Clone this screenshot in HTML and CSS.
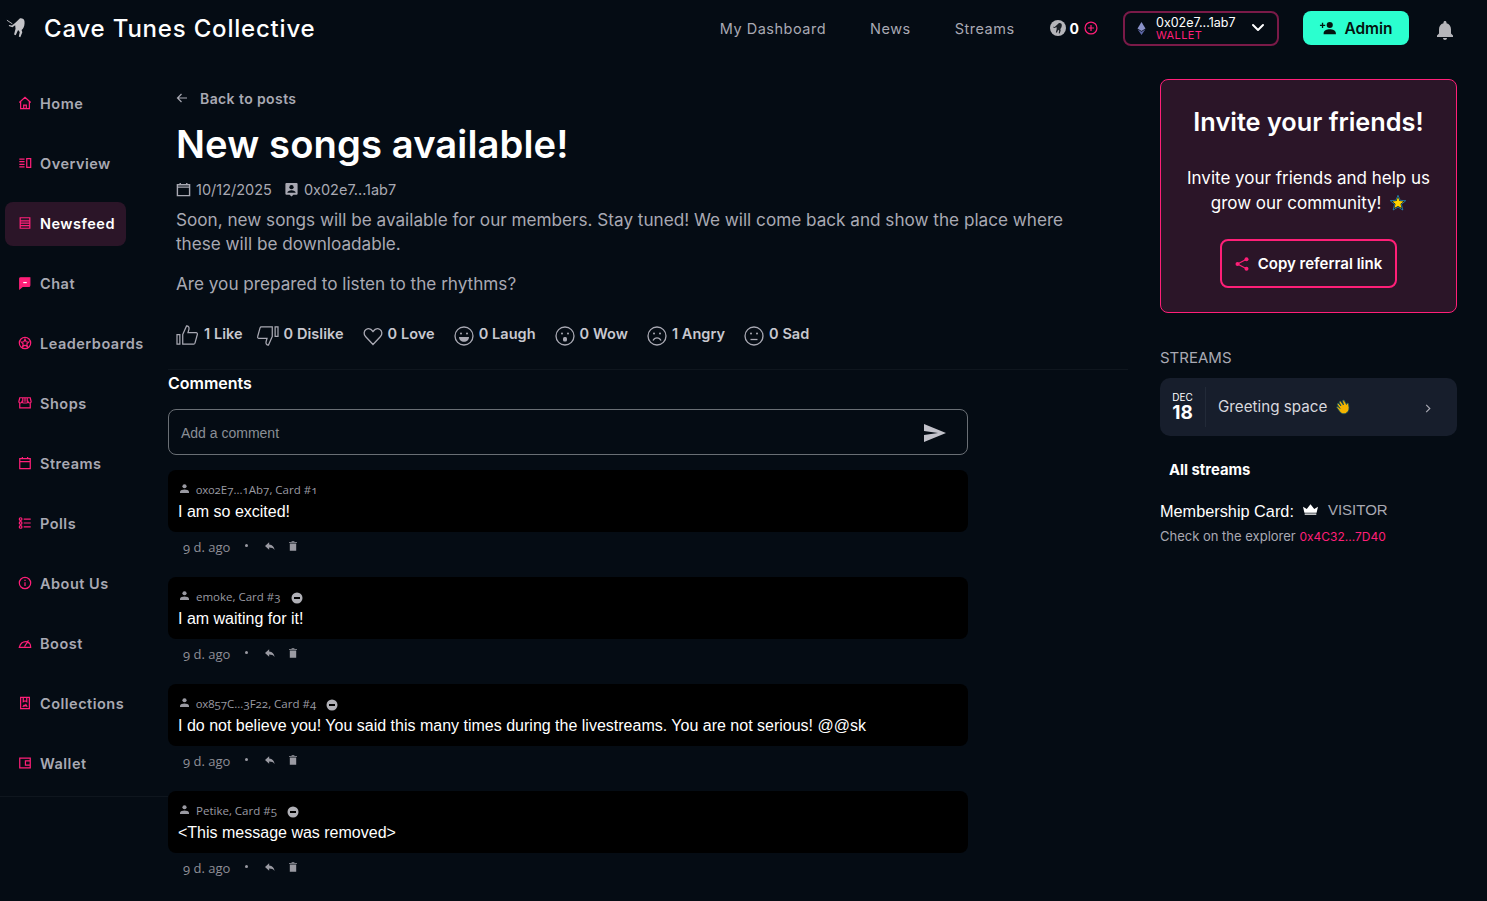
FILE: index.html
```html
<!DOCTYPE html>
<html>
<head>
<meta charset="utf-8">
<title>Cave Tunes Collective</title>
<link rel="stylesheet" href="styles.css">
</head>
<body>

<header class="topBar">
	<div class="brand">
		<svg class="brandLogo" viewBox="0 0 24 24"><path fill="#c4c4c8" d="M15 1.500c2.500-.6 5 .8 5.200 3.300.3 3-.4 6.200-2 8.400l-1.200 1 .8 2.300-2.200 5.500-1.600-.6 1-5-1.800-2.200-2.600 5.600-1.800-.7 1.600-6.400-.4-3.600-3 2.200-4-1.400.4-1.100 3.200.6 4.200-3.600z"/><path stroke="#c4c4c8" stroke-width="1" d="M1 3.500l6 4"/></svg>
		<span class="brandName">Cave Tunes Collective</span>
	</div>
	<nav class="topNav">
		<a>My Dashboard</a>
		<a>News</a>
		<a>Streams</a>
	</nav>
	<div class="tokens">
		<svg class="tokenCoin" viewBox="0 0 16 16"><circle cx="8" cy="8" r="8" fill="#b5b5ba"/><path fill="#1a1f26" d="M9 3c1.500-.4 2.800.5 2.800 2 0 1.600-.5 3-1.500 4l.4 1.500-1 3-1-.3.500-2.500-1-1-1.300 3-1-.4.800-3.300-.2-2-1.800 1-1.700-.7.200-.6 1.500.3z"/></svg>
		<b>0</b>
		<svg class="tokenPlus" viewBox="0 0 16 16" fill="none" stroke="#ff1f78" stroke-width="1.400"><circle cx="8" cy="8" r="6.800"/><path d="M8 4.500v7M4.500 8h7"/></svg>
	</div>
	<div class="walletBtn">
		<svg class="walletEth" viewBox="0 0 12 18"><path fill="#8a92c9" d="M6 0l5.500 9L6 12.300.5 9z"/><path fill="#5d66a5" d="M6 13.500L11.500 10 6 18 .5 10z"/></svg>
		<div class="walletText">
			<span class="walletAddr">0x02e7...1ab7</span>
			<span class="walletLabel">WALLET</span>
		</div>
		<svg class="walletArrow" viewBox="0 0 14 10" fill="none" stroke="#fff" stroke-width="2" stroke-linecap="round" stroke-linejoin="round"><path d="M2 2l5 5 5-5"/></svg>
	</div>
	<div class="adminBtn">
		<svg viewBox="0 0 20 16" fill="#04140f"><circle cx="12" cy="4.500" r="3.500"/><path d="M5 14c0-3 3.500-4.500 7-4.500s7 1.500 7 4.500v1H5zM3 2h1.500v2.300h2.300v1.500H4.500V8H3V5.800H.8V4.300H3z"/></svg>
		Admin
	</div>
	<svg class="bell" viewBox="0 0 18 20" fill="#b5b5ba"><path d="M9 0c.9 0 1.500.6 1.500 1.500v.7c2.900.7 4.500 3.200 4.500 6v4.300l2 2V16H1v-1.500l2-2V8.200c0-2.800 1.600-5.300 4.500-6v-.7C7.500.6 8.100 0 9 0zM7 17h4c0 1.200-.9 2-2 2s-2-.8-2-2z"/></svg>
</header>

<div class="pageGrid">

	<aside class="sideNav">
		<a class="navItem"><svg viewBox="0 0 16 16"><path d="M1.500 7.500L8 1.500l6.500 6M3 6.500v8h10v-8M6.500 14.500v-4h3v4"/></svg>Home</a>
		<a class="navItem"><svg viewBox="0 0 16 16"><path d="M1.500 3.500h6M1.500 6.500h6M1.500 9.500h6M1.500 12.500h6M10 3h4.500v10H10z"/></svg>Overview</a>
		<a class="navItem active"><svg viewBox="0 0 16 16"><path d="M2.500 2h11v12h-11zM2.500 5.500h11M2.500 8.200h11M2.500 11h11"/></svg>Newsfeed</a>
		<a class="navItem"><svg viewBox="0 0 16 16"><path class="solid" d="M3 2h10.500v8.500c0 1-.5 1.500-1.500 1.500H5l-3 2.500V3c0-.6.400-1 1-1z"/><path class="cut" d="M6 7.500h4"/></svg>Chat</a>
		<a class="navItem"><svg viewBox="0 0 16 16"><circle cx="8" cy="8" r="6.500"/><path d="M8 3.800l1.300 2.800 3 .3-2.200 2.100.6 3L8 10.500 5.300 12l.6-3-2.200-2.100 3-.3z"/></svg>Leaderboards</a>
		<a class="navItem"><svg viewBox="0 0 16 16"><path d="M2 2h12l1 4.500c0 1-1 1.500-1.700 1.500S12 7.500 11.500 6.500C11 7.500 10 8 9.700 8H6.300C6 8 5 7.500 4.500 6.500 4 7.500 3.500 8 2.700 8S1 7.500 1 6.500zM2 8v5.500h12V8M5.500 2v4.500M8 2v4.500M10.500 2v4.500"/></svg>Shops</a>
		<a class="navItem"><svg viewBox="0 0 16 16"><path d="M2 3h12v11.500H2zM2 6.500h12M5 1v2M11 1v2"/></svg>Streams</a>
		<a class="navItem"><svg viewBox="0 0 16 16"><circle cx="3" cy="3.500" r="1.500"/><circle cx="3" cy="8" r="1.500"/><circle cx="3" cy="12.500" r="1.500"/><path d="M6.500 3.500h8M6.500 8h8M6.500 12.500h8"/></svg>Polls</a>
		<a class="navItem"><svg viewBox="0 0 16 16"><circle cx="8" cy="8" r="6.500"/><path d="M8 7v4.500M8 4.300v1.400"/></svg>About Us</a>
		<a class="navItem"><svg viewBox="0 0 16 16"><path d="M1.500 13h13c0-4-2-6.500-5.500-6.500-3.500 0-6.500 2.500-7.500 6.500zM7.500 12l4.500-7M11 8l2-.5"/></svg>Boost</a>
		<a class="navItem"><svg viewBox="0 0 16 16"><path d="M3 1.500h10v13H3zM6 1.500v5l2-1 2 1v-5M5.500 12.500l1.500-2 1 1 1-1.500 1.500 2.500"/></svg>Collections</a>
		<a class="navItem"><svg viewBox="0 0 16 16"><path d="M2 2.500h12v11H2zM14 5.500H8.500v5H14"/></svg>Wallet</a>
	</aside>

	<main class="mainCol">
		<div class="post">
			<a class="backLink">
				<svg viewBox="0 0 12 12" fill="none" stroke="#a9a9b3" stroke-width="1.200"><path d="M11 6H1.500M5.500 2L1.500 6l4 4"/></svg>
				Back to posts
			</a>
			<h1 class="postTitle">New songs available!</h1>
			<div class="postMeta">
				<svg viewBox="0 0 16 16" fill="none" stroke="#a9a9b3" stroke-width="1.500"><path d="M1.500 3h13v11.500h-13zM1.500 5.500h13M4.500 1v2M11.500 1v2"/></svg>
				<span>10/12/2025</span>
				<svg class="metaUser" viewBox="0 0 16 16" fill="#a9a9b3"><path d="M2.500 1h11c.6 0 1 .4 1 1v10.500c0 .6-.4 1-1 1H10L8 15.500 6 13.500H2.500c-.6 0-1-.4-1-1V2c0-.6.400-1 1-1z"/><circle cx="8" cy="5.500" r="2.300" fill="#050c14"/><path fill="#050c14" d="M3.500 11.500c0-1.800 2.500-2.800 4.500-2.800s4.500 1 4.500 2.800z"/></svg>
				<span>0x02e7...1ab7</span>
			</div>
			<p class="postText">Soon, new songs will be available for our members. Stay tuned! We will come back and show the place where these will be downloadable.</p>
			<p class="postText second">Are you prepared to listen to the rhythms?</p>
			<div class="reactions">
				<span class="reaction"><svg class="thumb" viewBox="0 0 24 22"><path d="M1 10v10h3V10zM7 10l4-9c2 0 3 1.500 2.500 3.500L12.500 8H21c1 0 1.700 1 1.300 2l-2.500 9c-.2.600-.7 1-1.300 1H7z"/></svg><b>1 Like</b></span>
				<span class="reaction"><svg class="thumbDown" viewBox="0 0 24 22"><path d="M23 12V2h-3v10zM17 12l-4 9c-2 0-3-1.500-2.500-3.500l1-3.500H3c-1 0-1.700-1-1.300-2l2.500-9C4.400 2.400 4.900 2 5.500 2H17z"/></svg><b>0 Dislike</b></span>
				<span class="reaction"><svg viewBox="0 0 20 20"><path d="M10 18.500L2.500 10.500C.5 8.300.8 5 3 3.500c2.200-1.400 5-.8 7 2 2-2.800 4.800-3.400 7-2 2.200 1.500 2.500 4.800.5 7z"/></svg><b>0 Love</b></span>
				<span class="reaction"><svg viewBox="0 0 20 20"><circle cx="10" cy="10" r="9"/><circle class="dot" cx="7" cy="7.500" r="1"/><circle class="dot" cx="13" cy="7.500" r="1"/><path class="dot" d="M5 11h10c0 3-2.200 4.800-5 4.800S5 14 5 11z"/></svg><b>0 Laugh</b></span>
				<span class="reaction"><svg viewBox="0 0 20 20"><circle cx="10" cy="10" r="9"/><circle class="dot" cx="7" cy="7.500" r="1"/><circle class="dot" cx="13" cy="7.500" r="1"/><rect class="dot" x="8" y="11" width="4" height="4.500" rx="1.500"/></svg><b>0 Wow</b></span>
				<span class="reaction"><svg viewBox="0 0 20 20"><circle cx="10" cy="10" r="9"/><circle class="dot" cx="7" cy="7.500" r="1"/><circle class="dot" cx="13" cy="7.500" r="1"/><path d="M6 14.500c1-2 2.500-2.700 4-2.700s3 .7 4 2.700"/></svg><b>1 Angry</b></span>
				<span class="reaction"><svg viewBox="0 0 20 20"><circle cx="10" cy="10" r="9"/><circle class="dot" cx="7" cy="7.500" r="1"/><circle class="dot" cx="13" cy="7.500" r="1"/><path d="M6.500 13.500h7"/></svg><b>0 Sad</b></span>
			</div>
		</div>

		<section class="comments">
			<h2 class="commentsTitle">Comments</h2>
			<div class="commentInput">
				<span>Add a comment</span>
				<svg viewBox="0 0 22 18" fill="#c2c2ca"><path d="M0 0l22 9L0 18v-7l14-2L0 7z"/></svg>
			</div>

			<article class="comment">
				<div class="commentBox">
					<div class="commentAuthor"><svg class="personIcon" viewBox="0 0 10 10"><circle cx="5" cy="2.500" r="2.300"/><path d="M0 10V8.500C0 6.800 3 6 5 6s5 .8 5 2.500V10z"/></svg>0x02E7...1Ab7, Card #1</div>
					<div class="commentText">I am so excited!</div>
				</div>
				<div class="commentFoot"><span>9 d. ago</span><i class="footDot"></i><svg class="footIcon" viewBox="0 0 12 10"><path d="M5 0L0 4.500 5 9V6.200c3 0 5 .8 6.500 3C11 5.500 9 3 5 2.700z"/></svg><svg class="footIcon trash" viewBox="0 0 10 12"><path d="M1 3h8v9H1zM0 1h3l.5-1h3l.5 1h3v1H0z"/></svg></div>
			</article>

			<article class="comment">
				<div class="commentBox">
					<div class="commentAuthor"><svg class="personIcon" viewBox="0 0 10 10"><circle cx="5" cy="2.500" r="2.300"/><path d="M0 10V8.500C0 6.800 3 6 5 6s5 .8 5 2.500V10z"/></svg>emoke, Card #3<svg class="minusIcon" viewBox="0 0 12 12"><circle cx="6" cy="6" r="5.500"/><path class="bar" d="M3 5h6v2H3z"/></svg></div>
					<div class="commentText">I am waiting for it!</div>
				</div>
				<div class="commentFoot"><span>9 d. ago</span><i class="footDot"></i><svg class="footIcon" viewBox="0 0 12 10"><path d="M5 0L0 4.500 5 9V6.200c3 0 5 .8 6.500 3C11 5.500 9 3 5 2.700z"/></svg><svg class="footIcon trash" viewBox="0 0 10 12"><path d="M1 3h8v9H1zM0 1h3l.5-1h3l.5 1h3v1H0z"/></svg></div>
			</article>

			<article class="comment">
				<div class="commentBox">
					<div class="commentAuthor"><svg class="personIcon" viewBox="0 0 10 10"><circle cx="5" cy="2.500" r="2.300"/><path d="M0 10V8.500C0 6.800 3 6 5 6s5 .8 5 2.500V10z"/></svg>0x857C...3F22, Card #4<svg class="minusIcon" viewBox="0 0 12 12"><circle cx="6" cy="6" r="5.500"/><path class="bar" d="M3 5h6v2H3z"/></svg></div>
					<div class="commentText">I do not believe you! You said this many times during the livestreams. You are not serious! @@sk</div>
				</div>
				<div class="commentFoot"><span>9 d. ago</span><i class="footDot"></i><svg class="footIcon" viewBox="0 0 12 10"><path d="M5 0L0 4.500 5 9V6.200c3 0 5 .8 6.500 3C11 5.500 9 3 5 2.700z"/></svg><svg class="footIcon trash" viewBox="0 0 10 12"><path d="M1 3h8v9H1zM0 1h3l.5-1h3l.5 1h3v1H0z"/></svg></div>
			</article>

			<article class="comment">
				<div class="commentBox">
					<div class="commentAuthor"><svg class="personIcon" viewBox="0 0 10 10"><circle cx="5" cy="2.500" r="2.300"/><path d="M0 10V8.500C0 6.800 3 6 5 6s5 .8 5 2.500V10z"/></svg>Petike, Card #5<svg class="minusIcon" viewBox="0 0 12 12"><circle cx="6" cy="6" r="5.500"/><path class="bar" d="M3 5h6v2H3z"/></svg></div>
					<div class="commentText">&lt;This message was removed&gt;</div>
				</div>
				<div class="commentFoot"><span>9 d. ago</span><i class="footDot"></i><svg class="footIcon" viewBox="0 0 12 10"><path d="M5 0L0 4.500 5 9V6.200c3 0 5 .8 6.500 3C11 5.500 9 3 5 2.700z"/></svg><svg class="footIcon trash" viewBox="0 0 10 12"><path d="M1 3h8v9H1zM0 1h3l.5-1h3l.5 1h3v1H0z"/></svg></div>
			</article>
		</section>
	</main>

	<aside class="rightCol">
		<div class="inviteCard">
			<h3 class="inviteTitle">Invite your friends!</h3>
			<p class="inviteText">Invite your friends and help us grow our community! <svg class="starIcon" viewBox="0 0 16 16"><path fill="#0b0b0b" stroke="#2a9fd0" stroke-width=".7" d="M8 .3l2.100 5 5.600.4-4.300 3.600 1.400 5.700L8 12l-4.800 3 1.400-5.700L.3 5.700l5.600-.4z"/><path fill="#ffd400" d="M8 2.300l1.500 3.800 4.100.3-3.100 2.600 1 4.100L8 10.900l-3.500 2.200 1-4.100-3.100-2.600 4.100-.3z"/></svg></p>
			<div class="referralBtn">
				<svg viewBox="0 0 14 14"><circle fill="#ff1f78" cx="11.500" cy="2.300" r="2"/><circle fill="#ff1f78" cx="2.500" cy="7" r="2"/><circle fill="#ff1f78" cx="11.500" cy="11.700" r="2"/><path fill="none" stroke="#ff1f78" stroke-width="1.200" d="M11.500 2.300L2.500 7l9 4.700"/></svg>
				Copy referral link
			</div>
		</div>

		<div class="streamsLabel">STREAMS</div>
		<div class="streamCard">
			<div class="streamDate"><span>DEC</span><b>18</b></div>
			<div class="streamName">Greeting space <svg class="clapIcon" viewBox="0 0 16 16"><path fill="#f4b400" stroke="#11505a" stroke-width=".8" d="M3 4l3 3-2-4 1.500-1 3 4-1-4.500L9 1l2.500 4.500.5-1.500 1.500.5.500 4c.3 2.500-1 5-3.500 6-2 .8-4 .2-5.500-1.500L1.500 8 3 7.500 5 9.500 2 5z"/></svg></div>
			<svg class="streamArrow" viewBox="0 0 6 10" fill="none" stroke="#a9a9b3" stroke-width="1.300"><path d="M1 1l4 4-4 4"/></svg>
		</div>
		<a class="allStreams">All streams</a>
		<div class="memberRow">
			<span>Membership Card:</span>
			<svg class="crown" viewBox="0 0 16 11" fill="#fff"><path d="M0 2.500l4 2.500L8 0l4 5 4-2.500L14.500 9h-13zM1.800 9.800h12.400V11H1.800z"/></svg>
			<span class="memberLevel">VISITOR</span>
		</div>
		<div class="explorerRow">Check on the explorer <span class="pink">0x4C32...7D40</span></div>
	</aside>

</div>

</body>
</html>
```

FILE: styles.css
```css
body{
	margin:0;
	height:901px;
	overflow:hidden;
	background:#050c14;
	color:#fff;
	font-family:"Inter","Noto Sans",sans-serif;
}
a{
	cursor:pointer;
}
svg{
	flex:none;
}

/* top bar */
.topBar{
	display:flex;
	align-items:center;
	height:56px;
	padding:0 33px 2px 6px;
}
.brand{
	display:flex;
	align-items:center;
	gap:16px;
	margin-right:auto;
}
.brandLogo{
	width:22px;
	height:22px;
}
.brandName{
	font-size:24px;
	font-weight:500;
	letter-spacing:.8px;
}
.topNav{
	display:flex;
	gap:44px;
	font-size:14.5px;
	letter-spacing:.5px;
	color:#a9a9b3;
	margin-right:35px;
}
.tokens{
	display:flex;
	align-items:center;
	gap:4px;
	font-size:14px;
	margin-right:25px;
}
.tokenCoin{
	width:16px;
	height:16px;
}
.tokenPlus{
	width:14px;
	height:14px;
	margin-left:1px;
}
.walletBtn{
	display:flex;
	align-items:center;
	box-sizing:border-box;
	width:156px;
	height:35px;
	padding:0 12px 0 12px;
	border:2px solid #7a1a48;
	border-radius:8px;
	margin-right:24px;
}
.walletEth{
	width:9px;
	height:13px;
	margin-right:10px;
}
.walletText{
	display:flex;
	flex-direction:column;
	flex:1;
	font-size:12.500px;
	line-height:13px;
}
.walletLabel{
	color:#ff1f78;
	font-size:11px;
	line-height:12px;
	letter-spacing:.4px;
}
.walletArrow{
	width:14px;
	height:10px;
}
.adminBtn{
	display:flex;
	align-items:center;
	justify-content:center;
	gap:7px;
	width:106px;
	height:34px;
	border-radius:8px;
	background:#2bffcf;
	color:#04140f;
	font-size:15.500px;
	font-weight:600;
	margin-right:27px;
}
.adminBtn svg{
	width:18px;
	height:14px;
}
.bell{
	width:18px;
	height:20px;
	margin-top:5px;
}

/* page columns */
.pageGrid{
	display:grid;
	grid-template-columns:168px 960px 329px;
	align-items:start;
}

/* left menu */
.sideNav{
	display:flex;
	flex-direction:column;
	padding:16px 0 2px;
	border-bottom:1px solid #0f161e;
}
.navItem{
	display:flex;
	align-items:center;
	gap:8px;
	height:44px;
	width:121px;
	box-sizing:border-box;
	margin:8px 0 8px 5px;
	padding:0 0 2px 13px;
	border-radius:8px;
	font-size:14.5px;
	font-weight:600;
	letter-spacing:.5px;
	color:#a9a9b3;
	white-space:nowrap;
}
.navItem.active{
	background:#2b1528;
	color:#fff;
}
.navItem svg{
	width:14px;
	height:14px;
	fill:none;
	stroke:#ff1f78;
	stroke-width:1.400;
}
.navItem svg .solid{
	fill:#ff1f78;
}
.navItem svg .cut{
	stroke:#fff;
}

/* post */
.mainCol{
	padding-top:28px;
	min-width:0;
}
.post{
	padding-left:8px;
}
.backLink{
	display:flex;
	align-items:center;
	gap:12px;
	height:24px;
	font-size:14px;
	font-weight:600;
	letter-spacing:.4px;
	color:#a9a9b3;
}
.backLink svg{
	width:12px;
	height:12px;
	margin-top:-1px;
}
.postTitle{
	margin:12px 0 0;
	font-size:38.200px;
	line-height:44px;
	font-weight:600;
	letter-spacing:.1px;
}
.postMeta{
	display:flex;
	align-items:center;
	gap:5px;
	height:24px;
	margin-top:11px;
	font-size:14.5px;
	color:#a9a9b3;
}
.postMeta svg{
	width:15px;
	height:15px;
}
.postMeta .metaUser{
	margin-left:7px;
}
.postText{
	margin:7px 0 0;
	font-size:17.150px;
	line-height:24px;
	color:#a9a9b3;
	width:900px;
}
.postText.second{
	margin-top:16px;
}
.reactions{
	display:flex;
	align-items:center;
	gap:19px;
	height:28px;
	margin-top:25px;
}
.reaction{
	display:flex;
	align-items:center;
	gap:5px;
	font-size:14.500px;
	color:#c8c8cf;
}
.reaction b{
	font-weight:600;
	margin-top:-3px;
	letter-spacing:.05px;
}
.reaction svg{
	width:20px;
	height:20px;
	fill:none;
	stroke:#a9a9b3;
	stroke-width:1.300;
	margin-top:1px;
}
.reaction svg.thumb,
.reaction svg.thumbDown{
	width:23px;
	height:21px;
}
.reaction svg.thumbDown{
	margin-left:-6px;
}

.reaction svg .dot{
	fill:#a9a9b3;
	stroke:none;
}

/* comments */
.comments{
	margin-top:20px;
	border-top:1px solid #0f161e;
}
.commentsTitle{
	margin:1px 0 0;
	font-size:16px;
	line-height:24px;
	font-weight:600;
}
.commentInput{
	display:flex;
	align-items:center;
	justify-content:space-between;
	box-sizing:border-box;
	width:800px;
	height:46px;
	margin-top:14px;
	padding:1px 21px 0 12px;
	border:1px solid #6a6f75;
	border-radius:8px;
	font-family:"Liberation Sans",sans-serif;
	font-size:14px;
	color:#8a8f96;
}
.commentInput svg{
	width:22px;
	height:18px;
}
.comment{
	width:800px;
	height:107px;
}
.comments .comment:first-of-type{
	margin-top:15px;
}
.commentBox{
	box-sizing:border-box;
	height:62px;
	padding:11px 10px 0;
	border-radius:8px;
	background:#000;
}
.commentAuthor{
	display:flex;
	align-items:center;
	height:17px;
	margin-bottom:2px;
	font-family:"Open Sans",sans-serif;
	font-variant-numeric:oldstyle-nums;
	font-size:11.500px;
	color:#9a9aa2;
}
.personIcon{
	width:9px;
	height:9px;
	fill:#9a9aa2;
	margin:-3px 7px 0 2px;
}
.minusIcon{
	width:12px;
	height:12px;
	fill:#b0b0b6;
	margin:2px 0 0 10px;
}
.minusIcon .bar{
	fill:#000;
}
.commentText{
	font-family:"Liberation Sans",sans-serif;
	font-size:16px;
	line-height:24px;
	color:#fff;
}
.commentFoot{
	display:flex;
	align-items:center;
	height:30px;
	padding-left:15px;
	font-family:"Open Sans",sans-serif;
	font-variant-numeric:oldstyle-nums;
	font-size:13px;
	color:#8f8f97;
}
.footDot{
	width:3px;
	height:3px;
	border-radius:50%;
	background:#9a9aa2;
	margin:-3px 17px 0 15px;
}
.footIcon{
	width:10px;
	height:9px;
	fill:#9a9aa2;
	margin-top:-2px;
}
.footIcon.trash{
	width:8px;
	height:10px;
	margin-left:14px;
}

/* right column */
.rightCol{
	padding:21px 0 0 32px;
}
.inviteCard{
	box-sizing:border-box;
	height:234px;
	padding-top:24px;
	border:1px solid #ff1f78;
	border-radius:8px;
	background:#2b1528;
	text-align:center;
}
.inviteTitle{
	margin:0;
	font-size:25.300px;
	line-height:36px;
	font-weight:600;
}
.inviteText{
	margin:26px 0 0;
	padding:0 20px;
	font-size:17px;
	line-height:25px;
}
.starIcon{
	width:16px;
	height:16px;
	margin:0 0 -2px 4px;
}
.referralBtn{
	display:flex;
	align-items:center;
	justify-content:center;
	gap:9px;
	box-sizing:border-box;
	width:177px;
	height:49px;
	margin:23px auto 0;
	border:2px solid #ff1f78;
	border-radius:8px;
	font-size:15px;
	font-weight:600;
}
.referralBtn svg{
	width:14px;
	height:14px;
}
.streamsLabel{
	margin-top:33px;
	font-size:15px;
	line-height:24px;
	color:#a9a9b3;
}
.streamCard{
	display:flex;
	align-items:center;
	height:58px;
	margin-top:8px;
	padding-right:26px;
	border-radius:10px;
	background:#171e2c;
}
.streamDate{
	display:flex;
	flex-direction:column;
	align-items:center;
	justify-content:center;
	box-sizing:border-box;
	width:46px;
	height:40px;
	padding-bottom:1px;
	border-right:1px solid #222a38;
	font-size:10px;
	line-height:11px;
}
.streamDate b{
	font-size:19px;
	line-height:19px;
	font-weight:700;
}
.streamName{
	flex:1;
	margin:-2px 0 0 12px;
	font-size:15.200px;
	color:#d8d8de;
}
.clapIcon{
	width:16px;
	height:16px;
	margin:0 0 -3px 3px;
}
.streamArrow{
	width:6px;
	height:9px;
	margin-top:3px;
}
.allStreams{
	display:block;
	margin:22px 0 0 9px;
	font-size:14.800px;
	line-height:24px;
	font-weight:700;
}
.memberRow{
	display:flex;
	align-items:center;
	height:24px;
	margin-top:17px;
	font-family:"Liberation Sans",sans-serif;
	font-size:16.300px;
}
.crown{
	width:15px;
	height:11px;
	margin:-4px 10px 0 9px;
}
.memberLevel{
	font-size:15px;
	color:#a9a9b3;
	margin-top:-3px;
}
.explorerRow{
	margin-top:3px;
	font-size:13px;
	line-height:20px;
	color:#a9a9b3;
}
.pink{
	color:#ff1f78;
	font-size:12px;
}
```
